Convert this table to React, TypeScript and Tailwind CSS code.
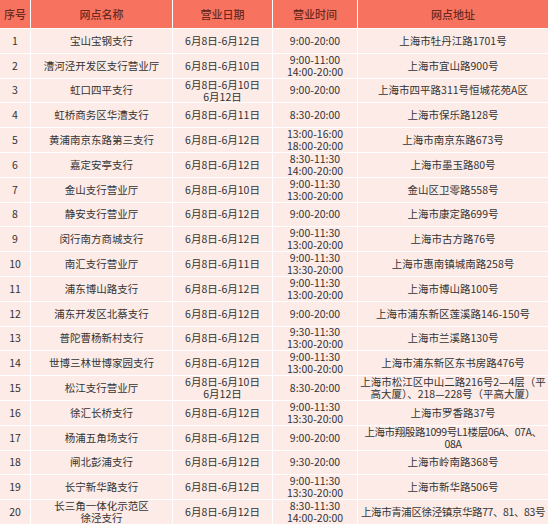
const rows: [string, string[], string[], string[], string[]][] = [
  ["1", ["宝山宝钢支行"], ["6月8日-6月12日"], ["9:00-20:00"], ["上海市牡丹江路1701号"]],
  ["2", ["漕河泾开发区支行营业厅"], ["6月8日-6月10日"], ["9:00-11:00", "14:00-20:00"], ["上海市宜山路900号"]],
  ["3", ["虹口四平支行"], ["6月8日-6月10日", "6月12日"], ["9:00-20:00"], ["上海市四平路311号恒城花苑A区"]],
  ["4", ["虹桥商务区华漕支行"], ["6月8日-6月11日"], ["8:30-20:00"], ["上海市保乐路128号"]],
  ["5", ["黄浦南京东路第三支行"], ["6月8日-6月12日"], ["13:00-16:00", "18:00-20:00"], ["上海市南京东路673号"]],
  ["6", ["嘉定安亭支行"], ["6月8日-6月12日"], ["8:30-11:30", "14:00-20:00"], ["上海市墨玉路80号"]],
  ["7", ["金山支行营业厅"], ["6月8日-6月10日"], ["9:00-11:30", "13:00-20:00"], ["金山区卫零路558号"]],
  ["8", ["静安支行营业厅"], ["6月8日-6月12日"], ["9:00-20:00"], ["上海市康定路699号"]],
  ["9", ["闵行南方商城支行"], ["6月8日-6月12日"], ["9:00-11:30", "13:00-20:00"], ["上海市古方路76号"]],
  ["10", ["南汇支行营业厅"], ["6月8日-6月11日"], ["9:00-11:30", "13:30-20:00"], ["上海市惠南镇城南路258号"]],
  ["11", ["浦东博山路支行"], ["6月8日-6月12日"], ["9:00-11:30", "13:00-20:00"], ["上海市博山路100号"]],
  ["12", ["浦东开发区北蔡支行"], ["6月8日-6月12日"], ["9:00-20:00"], ["上海市浦东新区莲溪路146-150号"]],
  ["13", ["普陀曹杨新村支行"], ["6月8日-6月12日"], ["9:30-11:30", "13:00-20:00"], ["上海市兰溪路130号"]],
  ["14", ["世博三林世博家园支行"], ["6月8日-6月12日"], ["9:00-11:30", "13:00-20:00"], ["上海市浦东新区东书房路476号"]],
  ["15", ["松江支行营业厅"], ["6月8日-6月10日", "6月12日"], ["8:30-20:00"], ["上海市松江区中山二路216号2—4层（平", "高大厦）、218—228号（平高大厦）"]],
  ["16", ["徐汇长桥支行"], ["6月8日-6月12日"], ["9:00-11:30", "13:30-20:00"], ["上海市罗香路37号"]],
  ["17", ["杨浦五角场支行"], ["6月8日-6月12日"], ["9:00-20:00"], ["上海市翔殷路1099号L1楼层06A、07A、", "08A"]],
  ["18", ["闸北彭浦支行"], ["6月8日-6月12日"], ["9:30-20:00"], ["上海市岭南路368号"]],
  ["19", ["长宁新华路支行"], ["6月8日-6月12日"], ["9:00-11:30", "13:30-20:00"], ["上海市新华路506号"]],
  ["20", ["长三角一体化示范区", "徐泾支行"], ["6月8日-6月12日"], ["8:30-11:30", "14:00-20:00"], ["上海市青浦区徐泾镇京华路77、81、83号"]],
];

const headers = ["序号", "网点名称", "营业日期", "营业时间", "网点地址"];

function Cell({ lines, tight }: { lines: string[]; tight?: boolean }) {
  return (
    <div
      className={
        "h-[23.8px] bg-[#fcebe7] flex flex-col items-center justify-center text-center leading-[12px] whitespace-nowrap " +
        (tight ? "tracking-[-0.4px]" : "")
      }
    >
      {lines.map((l, i) => (
        <span key={i} className="block leading-[12px]">
          {l}
        </span>
      ))}
    </div>
  );
}

export default function App() {
  return (
    <div className="w-[550px] h-[531px] bg-white">
      <div
        className="w-[548px] grid grid-cols-[30px_141px_99px_84px_190px] gap-px bg-white text-[10.5px] text-[#333333]"
        style={{ fontFamily: '"Noto Sans CJK SC", "Noto Sans", sans-serif' }}
      >
        {headers.map((h) => (
          <div
            key={h}
            className="h-[28px] bg-[#f8735f] flex items-center justify-center text-[11px] font-medium text-[#6a2a20]"
          >
            {h}
          </div>
        ))}
        {rows.map(([no, name, date, time, addr]) => (
          <div key={no} className="contents">
            <Cell lines={[no]} />
            <Cell lines={name} />
            <Cell lines={date} />
            <Cell lines={time} />
            <Cell lines={addr} tight={addr[0].length > 20} />
          </div>
        ))}
      </div>
    </div>
  );
}
